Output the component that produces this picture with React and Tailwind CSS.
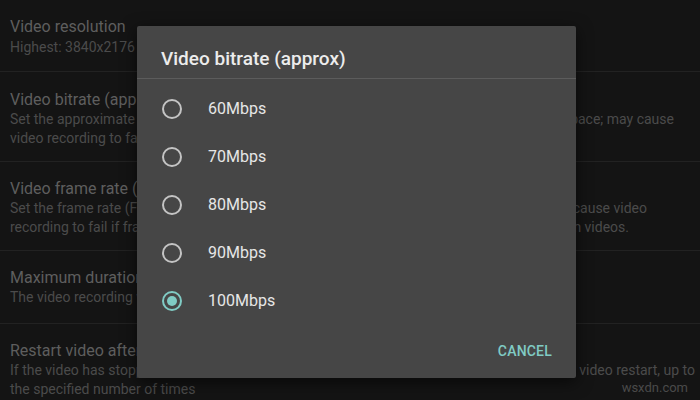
import React from 'react';

// only the parts of the list that show beside the dialog are written out
const settings = [
  {
    title: 'Video resolution',
    lines: [['Highest: 3840x2176', '', '']],
    box: 'h-[70px] justify-center',
  },
  {
    title: 'Video bitrate (approx)',
    lines: [
      ['Set the approximate', 'space; may cause', 'pr-[26px]'],
      ['video recording to fail', '', ''],
    ],
    box: 'pt-[18px] pb-[13px]',
  },
  {
    title: 'Video frame rate (FPS)',
    lines: [
      ['Set the frame rate (FPS)', 'cause video', 'pr-[53px]'],
      ['recording to fail if frame', 'in videos.', 'pr-[71px]'],
    ],
    box: 'pt-[17px] pb-[13px]',
  },
  {
    title: 'Maximum duration',
    lines: [['The video recording will', '', '']],
    box: 'h-[73px] justify-center',
  },
  {
    title: 'Restart video after',
    lines: [
      ['If the video has stopped', 'video restart, up to', 'pr-[5px]'],
      ['the specified number of times', '', ''],
    ],
    box: 'pt-[17px] pb-[13px]',
  },
];

const options = ['60Mbps', '70Mbps', '80Mbps', '90Mbps', '100Mbps'];

const Radio = ({ checked }) => (
  <span
    className={`flex h-[20px] w-[20px] items-center justify-center rounded-full border-2 ${
      checked ? 'border-[#80cbc4]' : 'border-[#c4c4c4]'
    }`}
  >
    {checked && <span className="h-[10px] w-[10px] rounded-full bg-[#80cbc4]" />}
  </span>
);

const App = () => {
  return (
    <div
      className="relative h-[400px] w-[700px] overflow-hidden bg-[#141414]"
      style={{ fontFamily: 'Roboto, "Noto Sans", sans-serif' }}
    >
      {/* settings list behind the dim */}
      <div className="flex flex-col pt-[2px]">
        {settings.map((s, i) => (
          <div key={i} className={`flex flex-col border-b border-[#222222] pl-[10px] ${s.box}`}>
            <div className="whitespace-nowrap text-[16px] leading-[20px] text-[#5e5e5e]">{s.title}</div>
            {s.lines.map(([left, right, pr], j) => (
              <div
                key={j}
                className={`flex justify-between whitespace-nowrap text-[14px] leading-[19px] text-[#4b4b4b] ${
                  i === 0 ? 'mt-[1px]' : ''
                } ${pr}`}
              >
                <span>{left}</span>
                <span>{right}</span>
              </div>
            ))}
          </div>
        ))}
      </div>

      {/* dialog */}
      <div className="absolute left-[137px] top-[26px] flex h-[352px] w-[439px] flex-col rounded-[2px] bg-[#464646] shadow-[0_4px_16px_rgba(0,0,0,0.6)]">
        <div className="flex h-[53px] items-end border-b border-[#5c5c5c] px-[24px] pb-[7px]">
          <span className="text-[19px] font-medium leading-[24px] text-[#ececec]">Video bitrate (approx)</span>
        </div>
        <div className="flex flex-col pt-[6px]">
          {options.map((o, i) => (
            <div key={o} className="flex h-[48px] items-center pl-[25px]">
              <Radio checked={i === options.length - 1} />
              <span className="ml-[26px] text-[16px] text-[#e6e6e6]">{o}</span>
            </div>
          ))}
        </div>
        <div className="flex flex-1 items-center justify-end pr-[24px]">
          <span className="text-[14px] font-medium tracking-[0.2px] text-[#80cbc4]">CANCEL</span>
        </div>
      </div>

      <span className="absolute bottom-[3px] right-[12px] text-[13px] text-[#4a4a4a]">wsxdn.com</span>
    </div>
  );
};

export default App;
